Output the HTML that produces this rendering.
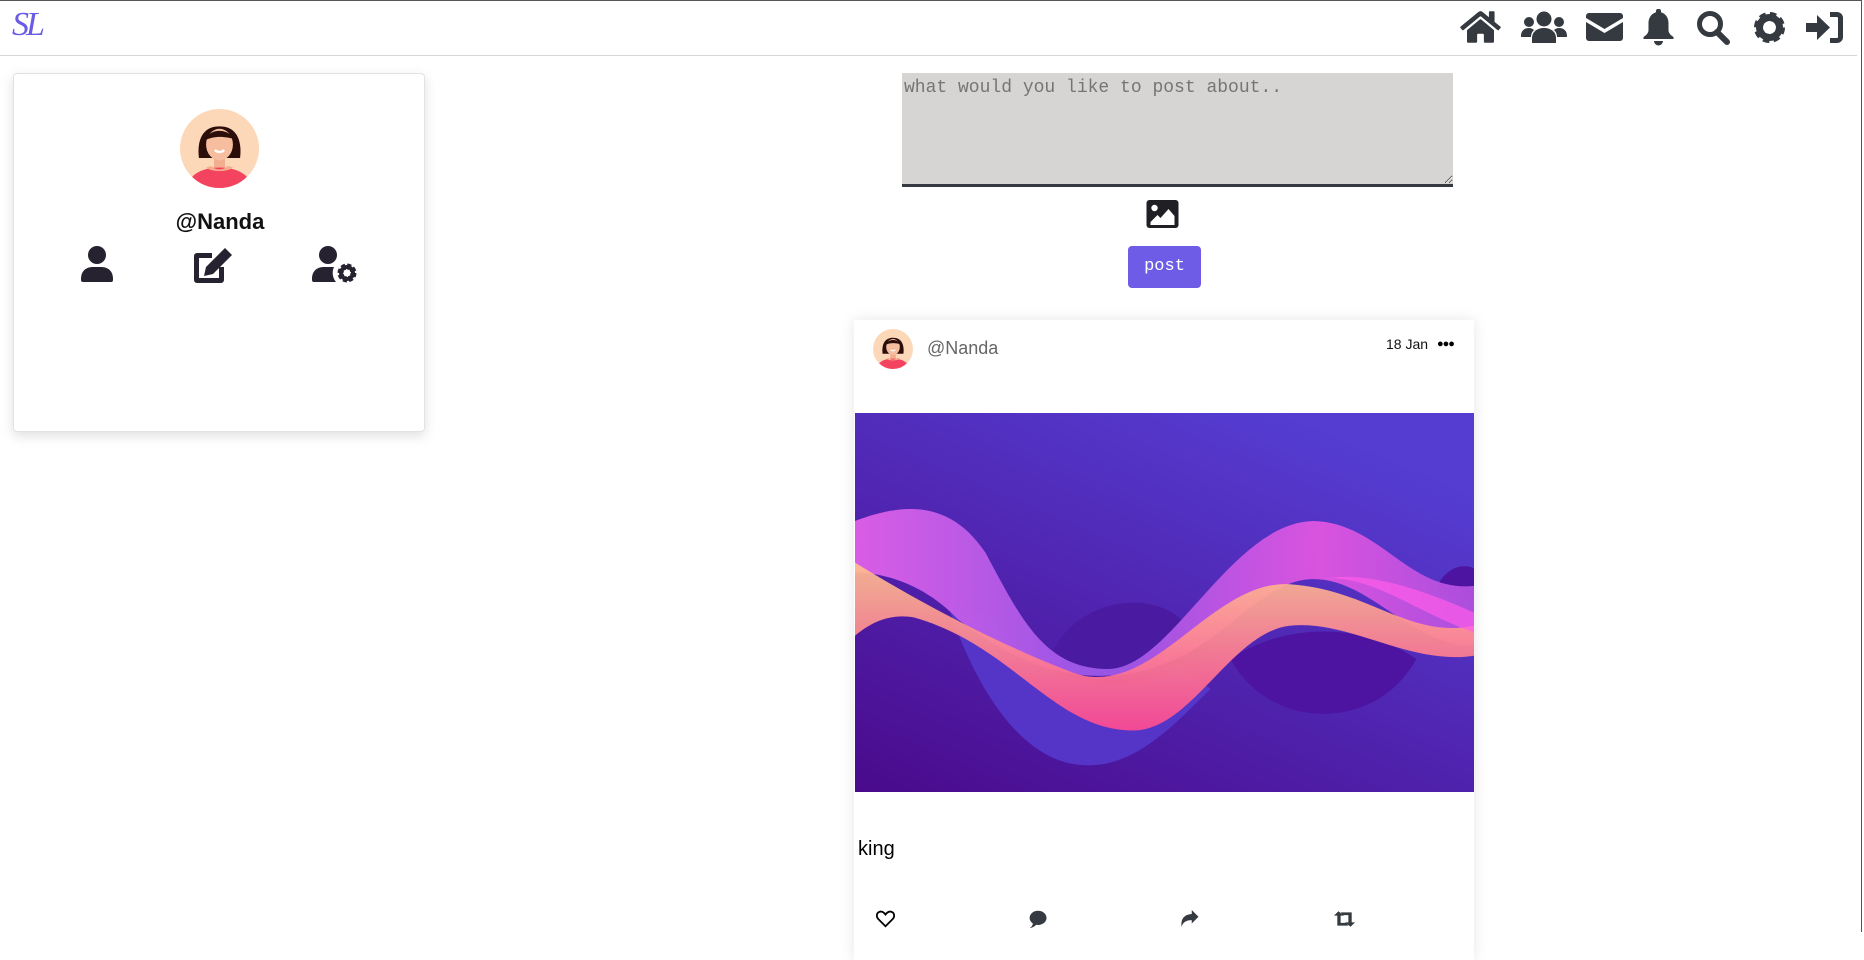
<!DOCTYPE html>
<html><head><meta charset="utf-8"><style>
*{box-sizing:border-box;margin:0;padding:0}
body{width:1864px;height:932px;overflow:hidden;background:#fff;font-family:"Liberation Sans",sans-serif;position:relative}
.frame{position:absolute;left:0;top:0;width:1862px;height:932px;border-top:1px solid #555;border-right:1px solid #555}
.navline{position:absolute;left:0;top:55px;width:1857px;height:1px;background:#d6d6d6}
.logo{position:absolute;left:12px;top:6px;font-family:"Liberation Serif",serif;font-style:italic;font-size:34px;color:#6b5ce6;letter-spacing:-3px}
.ni{position:absolute;fill:#343a40}
.card{position:absolute;left:13px;top:73px;width:412px;height:359px;background:#fff;border:1px solid #e2e2e2;border-radius:4px;box-shadow:0 4px 12px rgba(0,0,0,.13)}
.name{position:absolute;left:0;width:440px;top:209px;text-align:center;font-size:22px;font-weight:bold;color:#111;font-family:"Liberation Sans",sans-serif}
.ci{position:absolute;fill:#27222f}
textarea{position:absolute;left:902px;top:73px;width:551px;height:114px;background:#d6d5d3;border:none;border-bottom:3px solid #343a40;font-family:"Liberation Mono",monospace;font-size:18px;padding:5px 2px;color:#888;resize:both}
.btn{position:absolute;left:1128px;top:246px;width:73px;height:42px;background:#6e5ce6;border-radius:4px;color:#fff;font-family:"Liberation Mono",monospace;font-size:17px;text-align:center;line-height:42px}
.post{position:absolute;left:854px;top:320px;width:620px;height:640px;background:#fff;box-shadow:0 0 14px rgba(0,0,0,.1)}
.ai{position:absolute;top:590px}
</style></head><body>
<div class="frame"></div>
<div class="navline"></div>
<div class="logo">SL</div>

<svg class="ni" style="left:1460px;top:9px" width="41" height="36" viewBox="0 0 576 512"><path d="M280.37 148.26L96 300.11V464a16 16 0 0 0 16 16l112.06-.29a16 16 0 0 0 15.92-16V368a16 16 0 0 1 16-16h64a16 16 0 0 1 16 16v95.640a16 16 0 0 0 16 16.05L464 480a16 16 0 0 0 16-16V300L295.67 148.26a12.190 12.190 0 0 0-15.3 0zM571.6 251.47L488 182.56V44.05a12 12 0 0 0-12-12h-56a12 12 0 0 0-12 12v72.61L318.47 43a48 48 0 0 0-61 0L4.34 251.47a12 12 0 0 0-1.6 16.9l25.5 31A12 12 0 0 0 45.15 301l235.22-193.74a12.190 12.190 0 0 1 15.3 0L530.9 301a12 12 0 0 0 16.9-1.6l25.5-31a12 12 0 0 0-1.7-16.93z"/></svg>
<svg class="ni" style="left:1521px;top:11px" width="46" height="32" viewBox="0 0 46 32"><circle cx="23" cy="8" r="7.5"/><circle cx="8" cy="11" r="5"/><circle cx="38" cy="11" r="5"/><path d="M11 32v-5c0-6 5-10 12-10s12 4 12 10v5z"/><path d="M0 25c0-5 3-8 8-8 2 0 4 1 5 2-2 2-3 4-3 7H0z"/><path d="M46 25c0-5-3-8-8-8-2 0-4 1-5 2 2 2 3 4 3 7h10z"/></svg>
<svg class="ni" style="left:1586px;top:13px" width="37" height="28" viewBox="0 0 37 28"><path d="M3 0h31a3 3 0 0 1 3 3v2L18.5 16 0 5V3a3 3 0 0 1 3-3z"/><path d="M0 9l18.5 11L37 9v16a3 3 0 0 1-3 3H3a3 3 0 0 1-3-3z"/></svg>
<svg class="ni" style="left:1642px;top:9px" width="33" height="37" viewBox="0 0 33 37"><rect x="14" y="0" width="5" height="5" rx="2"/><path d="M16.5 3c6 0 10 5 10 11v7c0 3 2 5 5 7v2H1.5v-2c3-2 5-4 5-7v-7c0-6 4-11 10-11z"/><path d="M12 32h9a4.5 4.5 0 0 1-9 0z"/></svg>
<svg class="ni" style="left:1696px;top:10px" width="35" height="36" viewBox="0 0 35 36"><circle cx="14" cy="14" r="10.5" fill="none" stroke="#343a40" stroke-width="5"/><path d="M21 22l10 10" stroke="#343a40" stroke-width="6" stroke-linecap="round"/></svg>
<svg class="ni" style="left:1752px;top:10px" width="35" height="35" viewBox="0 0 35 35"><circle cx="17.5" cy="17.5" r="11" fill="none" stroke="#343a40" stroke-width="9" stroke-dasharray="5.2 3.44"/><circle cx="17.5" cy="17.5" r="10" fill="none" stroke="#343a40" stroke-width="7"/></svg>
<svg class="ni" style="left:1806px;top:12px" width="37" height="31" viewBox="0 0 37 31"><path d="M0 11h11V3l13 12.5L11 28v-8H0z"/><path d="M24 0h7a6 6 0 0 1 6 6v19a6 6 0 0 1-6 6h-7v-5h7a1 1 0 0 0 1-1V6a1 1 0 0 0-1-1h-7z"/></svg>

<svg width="0" height="0" style="position:absolute"><defs>
<symbol id="av" viewBox="0 0 100 100"><clipPath id="cc"><circle cx="50" cy="50" r="50"/></clipPath><g clip-path="url(#cc)"><rect width="100" height="100" fill="#fdd8b8"/><path d="M24 62c-2-15 0-40 26-40s28 25 26 40z" fill="#2b0d0a"/><rect x="43" y="55" width="14" height="20" fill="#f3ad8f"/><ellipse cx="50" cy="45" rx="17" ry="20" fill="#f6be9f"/><path d="M31 40c4-14 28-18 38-2-8-2-24-6-38 2z" fill="#2b0d0a"/><path d="M10 100c0-18 20-26 40-26s40 8 40 26z" fill="#f4435f"/><path d="M40 72c4 6 16 6 20 0 6 1 7 2 7 2-6 6-28 6-34 0z" fill="#f3ad8f"/><path d="M44 52q6 5 12 0" stroke="#fff" stroke-width="3" fill="none"/></g></symbol></defs></svg>

<div class="card"></div>
<svg style="position:absolute;left:180px;top:109px" width="79" height="79"><use href="#av"/></svg>
<div class="name">@Nanda</div>
<svg class="ci" style="left:81px;top:246px" width="32" height="36" viewBox="0 0 32 36"><circle cx="16" cy="9" r="9"/><path d="M0 33c0-8 5-12 12-12h8c7 0 12 4 12 12v1a2 2 0 0 1-2 2H2a2 2 0 0 1-2-2z"/></svg>
<svg class="ci" style="left:192px;top:246px" width="42" height="37" viewBox="0 0 42 37"><path d="M2 7h18v5H7v20h20V21h5v13a3 3 0 0 1-3 3H5a3 3 0 0 1-3-3V10a3 3 0 0 1 3-3z"/><path d="M12 30l2-9L33 2l7 7-19 19z"/></svg>
<svg class="ci" style="left:312px;top:246px" width="47" height="37" viewBox="0 0 47 37"><circle cx="16" cy="9" r="9"/><path d="M0 33c0-8 5-12 12-12h10c-2 4-2 10 2 15H2a2 2 0 0 1-2-2z"/><circle cx="35" cy="27" r="6.5" fill="none" stroke="#27222f" stroke-width="6" stroke-dasharray="3.3 1.8"/><circle cx="35" cy="27" r="6" fill="none" stroke="#27222f" stroke-width="4"/></svg>

<textarea placeholder="what would you like to post about.."></textarea>
<svg style="position:absolute;left:1144px;top:200px" width="37" height="28" viewBox="0 0 32 28"><rect width="32" height="28" rx="3" fill="#1f1f24"/><circle cx="8" cy="8" r="3.2" fill="#fff"/><path d="M4 25v-3l7-7 3 3 8-9 6 7v9z" fill="#fff"/></svg>
<div class="btn">post</div>

<div class="post">
<svg style="position:absolute;left:19px;top:9px" width="40" height="40"><use href="#av"/></svg>
<div style="position:absolute;left:73px;top:18px;font-size:18px;color:#666">@Nanda</div>
<div style="position:absolute;left:532px;top:16px;font-size:14px;color:#111">18 Jan</div>
<div style="position:absolute;left:583px;top:18px;font-size:11px;color:#000;letter-spacing:-1px">●●●</div>
<svg style="position:absolute;left:1px;top:93px" width="619" height="379" viewBox="0 0 1566 1140" preserveAspectRatio="none">
<defs>
<linearGradient id="bg" x1="0" y1="1" x2="0.7" y2="0"><stop offset="0" stop-color="#4a0a8c"/><stop offset="1" stop-color="#553dd2"/></linearGradient>
<linearGradient id="ga" x1="0" y1="0" x2="1" y2="0"><stop offset="0" stop-color="#e060e8"/><stop offset="0.4" stop-color="#9a58e8"/><stop offset="0.75" stop-color="#e055e0"/><stop offset="1" stop-color="#b050e0"/></linearGradient>
<linearGradient id="gb" x1="0" y1="0" x2="0" y2="1"><stop offset="0" stop-color="#ffc090"/><stop offset="1" stop-color="#ff4a92"/></linearGradient>
</defs>
<rect width="1566" height="1140" fill="url(#bg)"/>
<path d="M500 720C560 560 760 520 840 640 L900 700 C 800 800 600 800 500 720z" fill="#4a1aa0"/>
<path d="M950 740C1050 960 1320 960 1420 740 1300 640 1100 620 950 740z" fill="#4c14a0"/>
<path d="M1470 530C1500 440 1566 460 1566 470V560C1520 560 1480 550 1470 530z" fill="#4c14a0"/>
<path d="M230 560C300 820 420 1060 590 1060 720 1060 820 920 900 830L820 760C700 850 500 850 350 620z" fill="#5538cc" opacity=".9"/>
<path d="M0 325C120 270 240 260 330 420 420 620 480 770 640 770 800 770 950 330 1160 325 1330 330 1400 540 1566 520V700C1400 700 1300 490 1150 500 1000 510 900 780 640 790 480 800 350 700 260 620 180 520 80 480 0 480z" fill="url(#ga)" opacity=".95"/>
<path d="M0 450C150 560 350 690 550 780 750 870 900 500 1100 515 1300 530 1400 680 1566 640V730C1400 760 1250 620 1100 640 950 660 850 960 700 955 500 950 400 700 150 615 80 600 30 640 0 670z" fill="url(#gb)" opacity=".92"/>
<path d="M1180 500C1300 480 1420 600 1566 660V600C1450 540 1300 470 1180 500z" fill="#ff5de8" opacity=".7"/>
</svg>
<div style="position:absolute;left:4px;top:518px;font-size:20px;color:#000">king</div>
<svg class="ai" style="left:22px" width="19" height="18" viewBox="0 0 17 16"><path d="M8.5 14.5L2 8C0 6 .5 2.5 3 1.6 5 .9 7 2 8.5 4 10 2 12 .9 14 1.6 16.5 2.5 17 6 15 8z" fill="none" stroke="#000" stroke-width="1.6"/></svg>
<svg class="ai" style="left:174px" width="19" height="18" viewBox="0 0 16 16"><ellipse cx="8.5" cy="7" rx="7.5" ry="6.3" fill="#343a40"/><path d="M1 16c2-1 3-3 3-5l3 2c-2 2-4 3-6 3z" fill="#343a40"/></svg>
<svg class="ai" style="left:326px" width="19" height="18" viewBox="0 0 16 16"><path d="M16 6L10 0v3.5C4 4 0 7 1 15c1-4 4-6 9-6v3z" fill="#343a40"/></svg>
<svg class="ai" style="left:480px" width="21" height="18" viewBox="0 0 19 16"><path d="M4 1L0 5h3v9h10l-2-2.5H6V5h3z M15 15l4-4h-3V2H6l2 2.5h5V11h-3z" fill="#343a40"/></svg>
</div>
</body></html>
